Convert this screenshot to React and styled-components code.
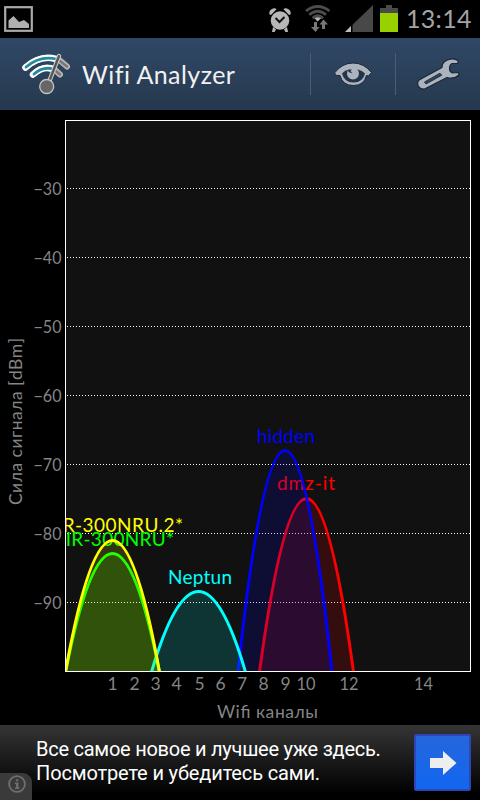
import styled, { createGlobalStyle } from "styled-components";

const HAND_FONT = `Lato, "Open Sans", sans-serif`;

// Plot area of the graph, in screen pixels
const PLOT = { left: 65.5, top: 120.5, right: 470.5, bottom: 671 };

const LEVELS = [
    { label: "−30", y: 188.5 },
    { label: "−40", y: 257.5 },
    { label: "−50", y: 326.5 },
    { label: "−60", y: 395.5 },
    { label: "−70", y: 464.5 },
    { label: "−80", y: 533.5 },
    { label: "−90", y: 602.5 },
];

const CHANNELS = [
    { label: "1", x: 112.5 },
    { label: "2", x: 134.5 },
    { label: "3", x: 155.5 },
    { label: "4", x: 176.5 },
    { label: "5", x: 199.5 },
    { label: "6", x: 220.5 },
    { label: "7", x: 242 },
    { label: "8", x: 263.5 },
    { label: "9", x: 285.5 },
    { label: "10", x: 306, width: 19 },
    { label: "12", x: 349, width: 19 },
    { label: "14", x: 423.5, width: 19 },
];

// Drawn in this order, later networks tint the ones below
const NETWORKS = [
    { name: "dmz-it", color: "#ff0000", x: 306.5, peak: 498.5, textX: 277, textY: 490, width: 58 },
    { name: "hidden", color: "#0000ff", x: 285, peak: 450.5, textX: 257, textY: 442.5, width: 58 },
    { name: "Neptun", color: "#00ffff", x: 198.5, peak: 591.5, textX: 168, textY: 584, width: 64 },
    { name: "DIR-300NRU*", color: "#00ff00", x: 112.5, peak: 553.5, textX: 51, textY: 545.5, width: 123 },
    { name: "DIR-300NRU.2*", color: "#ffff00", x: 112.5, peak: 540.5, textX: 42, textY: 532, width: 141 },
];

const App = () => {
    return (
        <>
            <GlobalStyle />
            <Screen>
                <StatusBar>
                    <GalleryIcon />
                    <StatusIcons />
                    <Clock>13:14</Clock>
                </StatusBar>
                <ActionBar>
                    <WifiLogo />
                    <Title>Wifi Analyzer</Title>
                    <Action $width={85}>
                        <EyeIcon />
                    </Action>
                    <Action $width={85}>
                        <WrenchIcon />
                    </Action>
                </ActionBar>
                <Graph />
                <AdBanner>
                    <AdText>
                        <AdLine $spacing={-0.25}>Все самое новое и лучшее уже здесь.</AdLine>
                        <AdLine $spacing={-0.14}>Посмотрете и убедитесь сами.</AdLine>
                    </AdText>
                    <AdButton>
                        <svg width="28" height="24" viewBox="0 0 28 24">
                            <path d="M1 7H14V0L27.500 12L14 24V17H1Z" fill="#eee" />
                        </svg>
                    </AdButton>
                    <InfoTab>
                        <svg width="18" height="18" viewBox="0 0 18 18">
                            <circle cx="9" cy="9" r="7.900" fill="none" stroke="#6e6e6e" strokeWidth="1.800" />
                            <path d="M8 4.200H10.400V6.200H8ZM7 7.500H10.400V12.600H11.500V14H7V12.600H8V9H7Z" fill="#6e6e6e" />
                        </svg>
                    </InfoTab>
                </AdBanner>
            </Screen>
        </>
    );
};

const Graph = () => {
    return (
        <GraphSvg width="480" height="615" viewBox="0 110 480 615">
            <defs>
                <clipPath id="plot">
                    <rect x="65" y="120" width="405" height="551" />
                </clipPath>
            </defs>
            <rect
                x={PLOT.left}
                y={PLOT.top}
                width={PLOT.right - PLOT.left}
                height={PLOT.bottom - PLOT.top}
                fill="#111"
            />
            {LEVELS.map(({ label, y }) => (
                <g key={label}>
                    <line x1="67" x2="470" y1={y} y2={y} stroke="#fff" strokeDasharray="1 2" />
                    <AxisText
                        x="61.5"
                        y={y + 6.5}
                        textAnchor="end"
                        textLength="28"
                        lengthAdjust="spacingAndGlyphs"
                    >
                        {label}
                    </AxisText>
                </g>
            ))}
            <g clipPath="url(#plot)">
                {NETWORKS.map((network) => (
                    <Network key={network.name} {...network} />
                ))}
            </g>
            <rect
                x={PLOT.left}
                y={PLOT.top}
                width={PLOT.right - PLOT.left}
                height={PLOT.bottom + 0.5 - PLOT.top}
                fill="none"
                stroke="#fff"
            />
            {CHANNELS.map(({ label, x, width }) => (
                <AxisText
                    key={label}
                    x={x}
                    y="690"
                    textAnchor="middle"
                    textLength={width}
                    lengthAdjust="spacingAndGlyphs"
                >
                    {label}
                </AxisText>
            ))}
            <AxisText x="217" y="717.5" textLength="101">
                Wifi каналы
            </AxisText>
            <AxisText transform="translate(22 505) rotate(-90)" textLength="167">
                Сила сигнала [dBm]
            </AxisText>
        </GraphSvg>
    );
};

// A channel's signal is a parabola that reaches two channels to each side
const Network = ({ name, color, x, peak, textX, textY, width }) => {
    const base = PLOT.bottom + 1;
    const d = `M${x - 47} ${base}Q${x} ${2 * peak - base} ${x + 47} ${base}`;
    return (
        <g>
            <path d={d} fill={color} fillOpacity="0.15" stroke={color} strokeWidth="3" />
            <NetworkName x={textX} y={textY} textLength={width} fill={color}>
                {name}
            </NetworkName>
        </g>
    );
};

const GalleryIcon = () => (
    <svg width="30" height="28" viewBox="4 5 30 28">
        <rect x="5.200" y="7.200" width="26.600" height="23.600" fill="none" stroke="#aaa" strokeWidth="2.200" />
        <path d="M8.500 28V20.500L13.500 16L19 22L24 20L29 24V28Z" fill="#b0b0b0" />
    </svg>
);

const StatusIcons = () => (
    <svg width="132" height="38" viewBox="268 0 132 38">
        {/* alarm */}
        <g fill="#b8b8b8">
            <circle cx="280" cy="20.500" r="9.300" />
            <path d="M269.500 14.500Q268.500 10 273 8.500Q275.500 7.700 276.500 9.300L271 15ZM290.500 14.500Q291.500 10 287 8.500Q284.500 7.700 283.500 9.300L289 15Z" />
            <path d="M273 27L276 29.500L274.500 32H272ZM287 27L284 29.500L285.500 32H288Z" />
        </g>
        <path d="M275.500 18L279.500 22L284.500 17" fill="none" stroke="#111" strokeWidth="2" />
        {/* wifi with traffic arrows */}
        <g fill="none" stroke="#4c4c4c" strokeWidth="2.800">
            <path d="M306 11Q317.700 2 329.500 11" />
            <path d="M309.300 14.800Q317.700 7.700 326 14.800" />
            <path d="M312.500 18.300Q317.700 13.300 323 18.300" />
        </g>
        <path d="M314.500 18.300Q317.700 16 321 18.300L317.700 21.500Z" fill="#b5b5b5" />
        <path d="M314 22H317V27H319.500L315.500 32L311 27H314ZM322 29V24.500H319.500L323.500 19.500L328 24.500H325V29Z" fill="#777" />
        {/* mobile signal */}
        <path d="M345 32L373 5V32Z" fill="#484848" />
        <path d="M345 32L351 26V32Z" fill="#bbb" />
        <path d="M351 24H352.500V32H351Z" fill="#000" />
        {/* battery */}
        <path d="M380 8H386V5H392V8H398V14H380Z" fill="#4a4a4a" />
        <rect x="380" y="13" width="18" height="19" fill="#99d000" />
    </svg>
);

const WifiLogo = () => (
    <svg width="52" height="46" viewBox="20 51 52 46">
        <g fill="none" strokeLinecap="round">
            <path d="M25.500 67.500Q42 53 60 60.500L67 66.500" stroke="#b5b5b5" strokeWidth="6" />
            <path d="M33 74.500Q44 64.500 54 69L60 74.500" stroke="#b5b5b5" strokeWidth="6" />
            <path d="M60 61L67 66.500M54 69.500L60 74.500" stroke="#777" strokeWidth="2.500" />
            <path d="M25.500 67.500Q40 54.500 56 59" stroke="#fff" strokeWidth="6.500" />
            <path d="M33 74.500Q42 66 51 68.500" stroke="#fff" strokeWidth="6.500" />
            <path d="M26 67Q40 55.500 56 59" stroke="#238b9f" strokeWidth="2.800" />
            <path d="M34 74Q42 67 51 68.500" stroke="#238b9f" strokeWidth="2.800" />
            <path d="M59 56L49 82" stroke="#ccc" strokeWidth="4.500" />
            <path d="M59 56L49 82" stroke="#555" strokeWidth="2.300" />
        </g>
        <circle cx="46.700" cy="86.500" r="7" fill="#666" stroke="#c4c4c4" strokeWidth="1.300" />
    </svg>
);

const EyeIcon = () => (
    <svg width="42" height="30" viewBox="332 60 42 30">
        <path
            d="M334.500 74Q342 64 353 64Q364 64 371.500 73.500L368.500 77L366.500 76.500Q364 86.500 353.500 86.500Q342.500 86.500 340 76.500L336.500 76.500Z"
            fill="#acb3bd"
            stroke="#18283a"
            strokeLinejoin="round"
        />
        <path d="M342 74.500Q345 71 349 70.500Q353 70 358 70.500Q362 71.500 365 74.500Q363 83.500 353.500 83.500Q344 83.500 342 74.500Z" fill="#22354b" />
        <circle cx="353" cy="74.500" r="6" fill="#acb3bd" />
        <path d="M348 70.500H352L350.500 72L352.500 74.500L348.500 73Z" fill="#22354b" />
    </svg>
);

const WrenchIcon = () => (
    <svg width="46" height="36" viewBox="415 56 46 36">
        <path
            d="M442 67.500Q442 62 447.500 60Q454 57.500 458.500 61L457.500 63.500H452Q449.500 65 449.500 68.500Q449.500 72 452.500 73L458.500 72.500L459 75Q454 79.500 447 77.500L424.500 89Q420.500 89.500 418.200 86Q416.800 81.500 419.500 79.800Z"
            fill="#acb3bd"
            stroke="#18283a"
            strokeWidth="1.200"
            strokeLinejoin="round"
        />
        <path d="M424.500 82L440 73.200L441.800 75.200L426 84Z" fill="#2f435b" stroke="#22344a" strokeLinejoin="round" />
    </svg>
);

const GlobalStyle = createGlobalStyle`
    body {
        margin: 0;
        background: #000;
    }
`;

const Screen = styled.div`
    display: flex;
    flex-direction: column;
    width: 480px;
    height: 800px;
    overflow: hidden;
    background: #000;
    font-family: ${HAND_FONT};

    svg {
        display: block;
        flex: none;
    }
`;

const StatusBar = styled.div`
    display: flex;
    align-items: center;
    justify-content: space-between;
    box-sizing: border-box;
    height: 38px;
    padding: 0 4px;

    svg:first-child {
        margin-right: auto;
    }
`;

const Clock = styled.div`
    width: 70px;
    margin-left: 6px;
    padding-bottom: 2px;
    color: #a4a4a4;
    font-size: 25px;
    line-height: 34px;
    letter-spacing: 0.3px;
    white-space: nowrap;
`;

const ActionBar = styled.header`
    display: flex;
    align-items: center;
    box-sizing: border-box;
    height: 72px;
    padding-left: 20px;
    background: linear-gradient(#304866, #26384e);
`;

const Title = styled.h1`
    flex: 1;
    margin: 0 0 0 10px;
    color: #f1f1f1;
    font-size: 25px;
    font-weight: 400;
    letter-spacing: 0.45px;
    white-space: nowrap;
`;

const Action = styled.div`
    display: flex;
    align-items: center;
    justify-content: center;
    box-sizing: border-box;
    width: ${({ $width }) => $width}px;
    height: 42px;
    border-left: 1px solid #4a5d76;
`;

const GraphSvg = styled.svg`
    font-family: ${HAND_FONT};
`;

const AxisText = styled.text`
    fill: #858585;
    font-size: 17.5px;
`;

const NetworkName = styled.text`
    font-size: 19px;
`;

const AdBanner = styled.div`
    position: relative;
    display: flex;
    align-items: center;
    justify-content: space-between;
    box-sizing: border-box;
    height: 75px;
    padding: 0 9px 0 36px;
    background: linear-gradient(#353535, #000 92%);
`;

const AdText = styled.div`
    margin-bottom: 4px;
    color: #fff;
    font-family: Roboto, sans-serif;
    font-size: 20px;
    line-height: 24px;
    white-space: nowrap;
`;

const AdLine = styled.div`
    letter-spacing: ${({ $spacing }) => $spacing}px;
`;

const AdButton = styled.div`
    display: flex;
    align-items: center;
    justify-content: center;
    box-sizing: border-box;
    width: 57px;
    height: 57px;
    border: 2px solid #2f45b5;
    border-radius: 2px;
    background: linear-gradient(#2566dc, #1266f0);
`;

const InfoTab = styled.div`
    position: absolute;
    left: 0;
    bottom: 0;
    box-sizing: border-box;
    width: 32px;
    height: 27px;
    padding: 2px 0 0 8px;
    border-radius: 0 9px 0 0;
    background: #3a3a3a;
`;

export default App;
